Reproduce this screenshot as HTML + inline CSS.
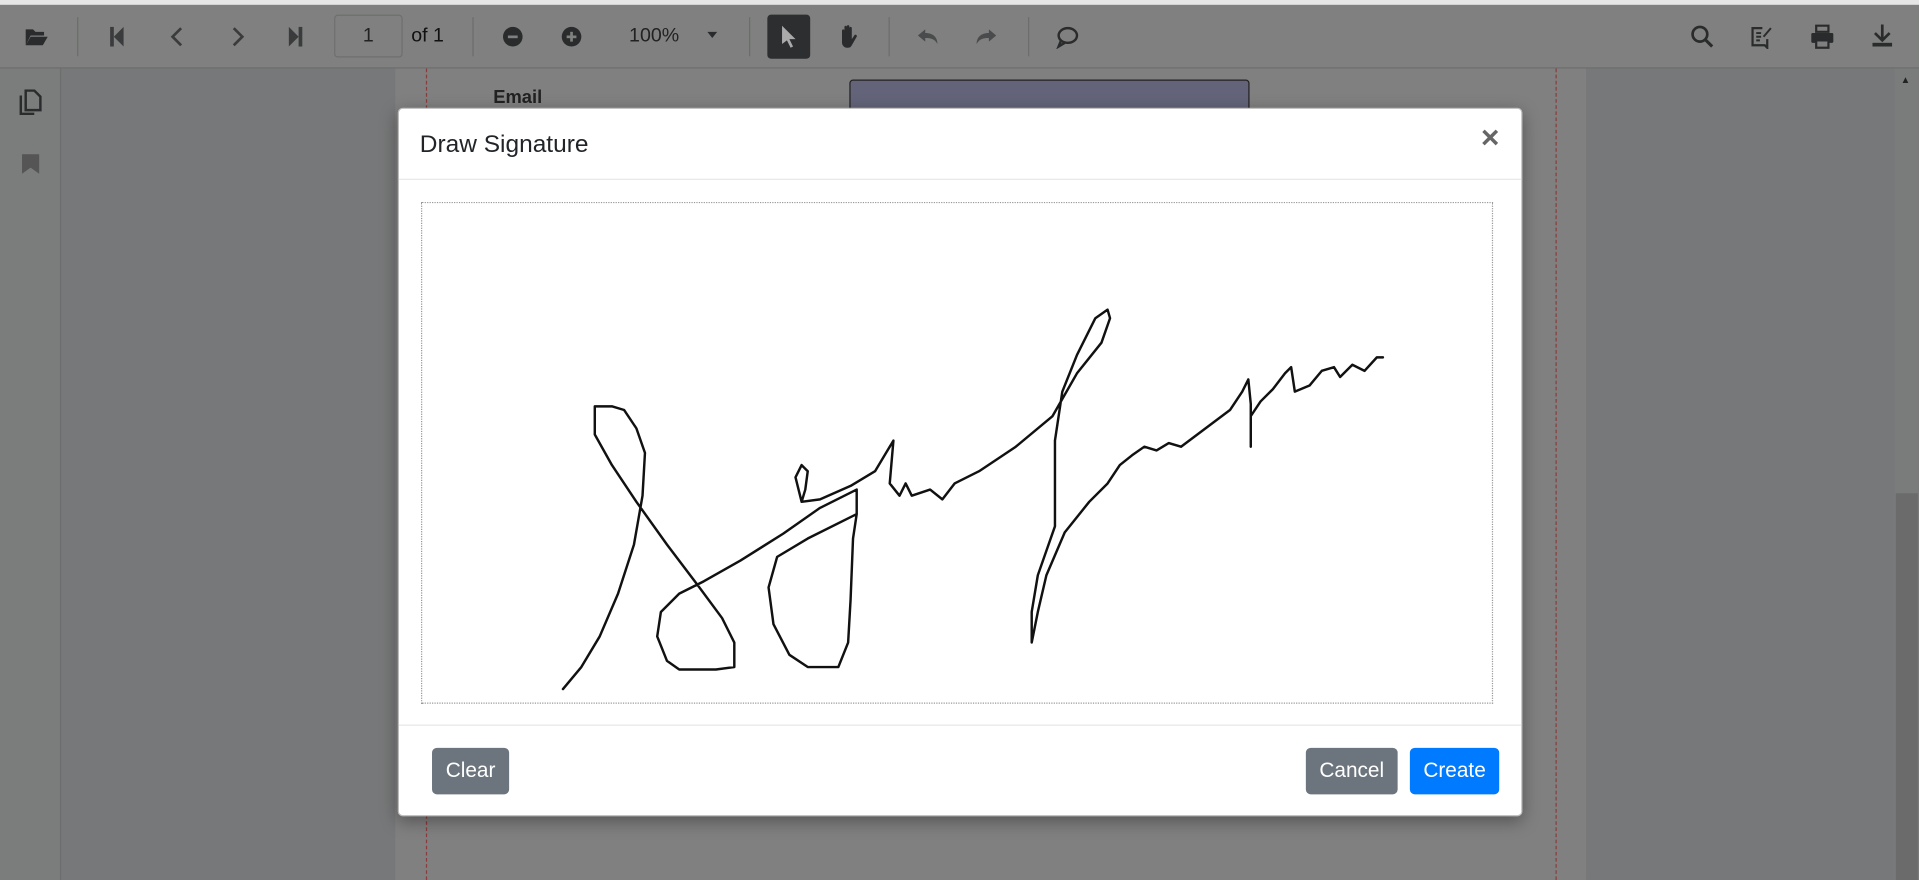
<!DOCTYPE html>
<html><head><meta charset="utf-8"><style>
html,body{margin:0;padding:0;width:1919px;height:880px;overflow:hidden;background:#777879;font-family:"Liberation Sans",Arial,sans-serif}
#s{position:absolute;left:0;top:0;width:1568px;height:719px;transform:scale(1.22385,1.22392);transform-origin:0 0;background:#777879}
.a{position:absolute}
.sep{position:absolute;top:14px;width:1px;height:32px;background:#6c6d6c}
svg.i{position:absolute}
</style></head><body><div id="s">
<div class="a" style="left:0;top:0;width:1568px;height:4px;background:#e6e6e6"></div>
<div class="a" style="left:0;top:4px;width:1568px;height:51px;background:#7f807f;border-bottom:1px solid #6d6e6d"></div>
<div class="a" style="left:0;top:56px;width:49px;height:663px;background:#7b7c7c;border-right:1px solid #6d6e6d"></div>
<div class="a" style="left:323px;top:56px;width:973px;height:663px;background:#808080"></div>
<div class="a" style="left:348px;top:56px;width:0;height:663px;border-left:1px dashed #8a3c3c"></div>
<div class="a" style="left:1271px;top:56px;width:0;height:663px;border-left:1px dashed #8a3c3c"></div>
<div class="a" style="left:1548px;top:56px;width:20px;height:663px;background:#7a7b7b"></div>
<div class="a" style="left:1549px;top:403px;width:18px;height:316px;background:#6b6b6b"></div>
<div class="a" style="left:1553px;top:61px;font-size:8px;color:#222">▲</div>
<div class="a" style="left:403px;top:71px;font-size:15px;font-weight:bold;color:#222">Email</div>
<div class="a" style="left:694px;top:65px;width:325px;height:40px;background:#636479;border:1px solid #222;border-radius:3px"></div>
<!-- toolbar -->
<svg class="i" style="left:20px;top:20px" width="20" height="20" viewBox="0 0 20 20"><path d="M1 4h6l2 2h7v3H5l-4 8z M5 10h14l-4 7H1z" fill="#2a2b2c"/></svg>
<div class="sep" style="left:63px"></div>
<svg class="i" style="left:88px;top:21px" width="16" height="18" viewBox="0 0 16 18"><rect x="2" y="1" width="3" height="16" fill="#3a3b3c"/><path d="M13 1v16L5 9z" fill="#3a3b3c"/></svg>
<svg class="i" style="left:137px;top:21px" width="16" height="18" viewBox="0 0 16 18"><path d="M11 2L4 9l7 7" stroke="#3a3b3c" stroke-width="2.2" fill="none"/></svg>
<svg class="i" style="left:186px;top:21px" width="16" height="18" viewBox="0 0 16 18"><path d="M5 2l7 7-7 7" stroke="#3a3b3c" stroke-width="2.2" fill="none"/></svg>
<svg class="i" style="left:233px;top:21px" width="16" height="18" viewBox="0 0 16 18"><path d="M3 1v16l8-8z" fill="#3a3b3c"/><rect x="11" y="1" width="3" height="16" fill="#3a3b3c"/></svg>
<div class="a" style="left:273px;top:12px;width:56px;height:35px;border:1px solid #6e6f6e;border-radius:3px;box-sizing:border-box;text-align:center;line-height:33px;font-size:16px;color:#222">1</div>
<div class="a" style="left:336px;top:21px;font-size:16px;color:#111">of 1</div>
<div class="sep" style="left:386px"></div>
<svg class="i" style="left:410px;top:21px" width="18" height="18" viewBox="0 0 18 18"><circle cx="9" cy="9" r="8" fill="#2a2b2c"/><rect x="5" y="8" width="8" height="2.2" fill="#7f807f"/></svg>
<svg class="i" style="left:458px;top:21px" width="18" height="18" viewBox="0 0 18 18"><circle cx="9" cy="9" r="8" fill="#2a2b2c"/><rect x="5" y="8" width="8" height="2.2" fill="#7f807f"/><rect x="7.9" y="5" width="2.2" height="8" fill="#7f807f"/></svg>
<div class="a" style="left:514px;top:21px;font-size:16px;color:#222">100%</div>
<div class="a" style="left:578px;top:26px;width:0;height:0;border-left:4px solid transparent;border-right:4px solid transparent;border-top:5px solid #2a2b2c"></div>
<div class="sep" style="left:612px"></div>
<div class="a" style="left:627px;top:12px;width:35px;height:36px;background:#2d2e30;border-radius:3px"></div>
<svg class="i" style="left:636px;top:20px" width="16" height="20" viewBox="0 0 16 20"><path d="M3 1v15l4-3 3 6 2-1-3-6h5z" fill="#aaa"/></svg>
<svg class="i" style="left:684px;top:20px" width="18" height="20" viewBox="0 0 18 20"><path d="M4 10V5a1 1 0 012 0v4V2a1 1 0 012 0v7V1.5a1 1 0 012 0V9V3a1 1 0 012 0v9l2-3a1 1 0 012 1l-4 7c-1 2-2 2-4 2H8c-2 0-4-2-4-4z" fill="#2a2b2c"/></svg>
<div class="sep" style="left:726px"></div>
<svg class="i" style="left:749px;top:22px" width="18" height="16" viewBox="0 0 18 16"><path d="M7 2L1 7l6 5V9c5 0 8 1 10 5 0-5-3-9-10-9z" fill="#4a4b4c"/></svg>
<svg class="i" style="left:797px;top:22px" width="18" height="16" viewBox="0 0 18 16"><path d="M11 2l6 5-6 5V9C6 9 3 10 1 14c0-5 3-9 10-9z" fill="#4a4b4c"/></svg>
<div class="sep" style="left:840px"></div>
<svg class="i" style="left:862px;top:20px" width="20" height="20" viewBox="0 0 20 20"><ellipse cx="10.5" cy="9" rx="7.5" ry="6" stroke="#2a2b2c" stroke-width="2" fill="none"/><path d="M5 13l-2 5 5-3" stroke="#2a2b2c" stroke-width="2" fill="none"/></svg>
<svg class="i" style="left:1381px;top:20px" width="20" height="20" viewBox="0 0 20 20"><circle cx="8" cy="8" r="6" stroke="#2a2b2c" stroke-width="2.2" fill="none"/><path d="M12 12l6 6" stroke="#2a2b2c" stroke-width="2.5"/></svg>
<svg class="i" style="left:1430px;top:20px" width="20" height="20" viewBox="0 0 20 20"><path d="M10 3H2v14h10l2 2v-7" stroke="#2a2b2c" stroke-width="1.8" fill="none"/><path d="M5 7h4M5 10h4M5 13h3M11 10l6-7" stroke="#2a2b2c" stroke-width="1.6"/></svg>
<svg class="i" style="left:1479px;top:20px" width="20" height="20" viewBox="0 0 20 20"><path d="M5 1h10v5H5z" stroke="#2a2b2c" stroke-width="1.8" fill="none"/><rect x="1" y="7" width="18" height="8" rx="1" fill="#2a2b2c"/><rect x="5" y="13" width="10" height="6" fill="#7f807f" stroke="#2a2b2c" stroke-width="1.8"/></svg>
<svg class="i" style="left:1528px;top:19px" width="20" height="20" viewBox="0 0 20 20"><path d="M10 1v12M4 8l6 6 6-6" stroke="#2a2b2c" stroke-width="2.2" fill="none"/><rect x="2" y="16" width="16" height="3" fill="#2a2b2c"/></svg>
<svg class="i" style="left:15px;top:73px" width="20" height="22" viewBox="0 0 20 22"><path d="M6 1h7l5 5v11H6z" stroke="#2a2b2c" stroke-width="2" fill="none"/><path d="M2 5v15h11" stroke="#2a2b2c" stroke-width="2" fill="none"/></svg>
<svg class="i" style="left:17px;top:125px" width="16" height="18" viewBox="0 0 16 18"><path d="M1 1h14v16l-7-5-7 5z" fill="#555"/></svg>
<!-- modal -->
<div class="a" style="left:325px;top:88px;width:919px;height:579px;background:#fff;border:1px solid #bbb;border-radius:4px;box-sizing:border-box;box-shadow:0 4px 14px rgba(0,0,0,.35)">
<div class="a" style="left:0;top:0;width:917px;height:57px;border-bottom:1px solid #e5e8eb"></div>
<div class="a" style="left:17px;top:18px;font-size:20px;color:#212529">Draw Signature</div>
<div class="a" style="left:884px;top:8px;font-size:26px;font-weight:bold;color:#666">×</div>
<div class="a" style="left:18px;top:76px;width:876px;height:410px;border:1px dotted #999;box-sizing:border-box"></div>
<div class="a" style="left:0;top:503px;width:917px;height:1px;background:#e5e8eb"></div>
<div class="a" style="left:27px;top:522px;width:63px;height:38px;background:#6c757d;border-radius:4px;color:#fff;font-size:17px;line-height:38px;text-align:center">Clear</div>
<div class="a" style="left:741px;top:522px;width:75px;height:38px;background:#6c757d;border-radius:4px;color:#fff;font-size:17px;line-height:38px;text-align:center">Cancel</div>
<div class="a" style="left:826px;top:522px;width:73px;height:38px;background:#007bff;border-radius:4px;color:#fff;font-size:17px;line-height:38px;text-align:center">Create</div>
</div>
<svg class="a" style="left:0;top:0" width="1568" height="719" viewBox="0 0 1568 719"><path fill="none" stroke="#111" stroke-width="2" stroke-linejoin="round" stroke-linecap="round" d="M460 563L475 545L490 520L505 485L518 445L525 405L527 370L520 350L510 335L500 332L486 332L486 355L500 380L520 410L545 445L570 478L590 505L600 525L600 545L585 547L555 547L545 540L537 520L540 500L555 485L575 475L605 458L640 436L670 415L690 405L700 400L700 420L660 440L635 455L628 480L632 510L645 535L660 545L685 545L693 525L695 490L697 440L700 420 M655 410L650 390L655 380L660 385L658 400L655 410L670 408L695 397L715 385L730 360L727 395L735 405L740 395L745 405L760 400L770 408L780 395L800 385L830 365L860 340L880 305L900 280L907 260L905 253L895 260L880 290L868 320L862 360L862 430L855 450L848 470L843 500L843 525L848 500L855 470L870 435L890 410L905 395L915 380L925 372L935 365L945 368L955 362L965 365L985 350L1005 335L1015 320L1020 310L1022 330L1022 365L1022 340L1030 328L1040 318L1050 305L1055 300L1058 320L1070 315L1080 303L1090 300L1095 308L1105 298L1115 303L1125 292L1130 292"/></svg>
</div></body></html>
